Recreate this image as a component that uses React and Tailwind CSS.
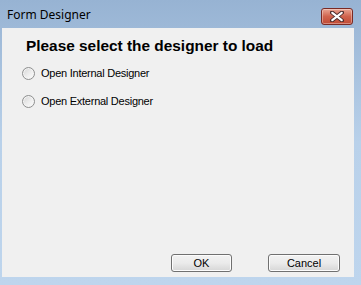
import React from "react";

function CloseButton() {
  return (
    <div className="w-[32px] h-[17px] rounded-[3px] border border-[#7a2a24] bg-gradient-to-b from-[#e8a493] via-[#d0634d] to-[#c04a35] flex items-center justify-center shadow-[inset_0_0_0_1px_rgba(255,255,255,0.35)]">
      <svg width="14" height="11" viewBox="0 0 14 11">
        <path d="M2 1.5 L12 9.5 M12 1.5 L2 9.5" stroke="#4a2a2a" strokeWidth="4" strokeLinecap="round" />
        <path d="M2.3 1.8 L11.7 9.2 M11.7 1.8 L2.3 9.2" stroke="#ffffff" strokeWidth="2.2" strokeLinecap="round" />
      </svg>
    </div>
  );
}

function Radio({ label }) {
  return (
    <div className="flex items-center h-[20px]">
      <div className="w-[13px] h-[13px] rounded-full border border-[#8e8f8f] bg-gradient-to-br from-[#d4d4d4] via-[#ececec] to-[#ffffff] shadow-[inset_0_0_0_1px_#f4f4f4]" />
      <span
        className="ml-[6px] text-[11px] leading-[14px] tracking-[-0.25px] text-[#000]"
        style={{ fontFamily: '"Liberation Sans", Arial, sans-serif' }}
      >
        {label}
      </span>
    </div>
  );
}

function WinButton({ children, w }) {
  return (
    <div
      className={`${w} h-[18px] rounded-[3px] border border-[#707070] bg-gradient-to-b from-[#f2f2f2] via-[#ebebeb] to-[#d6d6d6] flex items-center justify-center text-[11px] text-black shadow-[inset_0_0_0_1px_#fcfcfc]`}
      style={{ fontFamily: '"Liberation Sans", Arial, sans-serif' }}
    >
      {children}
    </div>
  );
}

export default function App() {
  return (
    <div className="w-[361px] h-[285px] flex flex-col bg-gradient-to-b from-[#97b3d3] via-[#b9d1ea] to-[#bed5ed] overflow-hidden">
      <div className="h-[28px] flex items-start justify-between pl-[7px] pr-[8px]">
        <span
          className="mt-[7px] text-[12px] leading-[16px] text-black"
          style={{ fontFamily: '"Noto Sans", "Open Sans", sans-serif' }}
        >
          Form Designer
        </span>
        <div className="mt-[8px]">
          <CloseButton />
        </div>
      </div>
      <div className="flex-1 ml-[2px] mr-[7px] mb-[8px] bg-[#f0f0f0] flex flex-col">
        <div
          className="pt-[9px] pl-[24px] text-[15.4px] leading-[18px] font-bold text-black"
          style={{ fontFamily: '"Liberation Sans", Arial, sans-serif' }}
        >
          Please select the designer to load
        </div>
        <div className="pl-[20px] mt-[8px] flex flex-col gap-[8px]">
          <Radio label="Open Internal Designer" />
          <Radio label="Open External Designer" />
        </div>
        <div className="flex-1" />
        <div className="flex justify-end gap-[36px] pr-[14px] pb-[5px]">
          <WinButton w="w-[61px]">OK</WinButton>
          <WinButton w="w-[72px]">Cancel</WinButton>
        </div>
      </div>
    </div>
  );
}
